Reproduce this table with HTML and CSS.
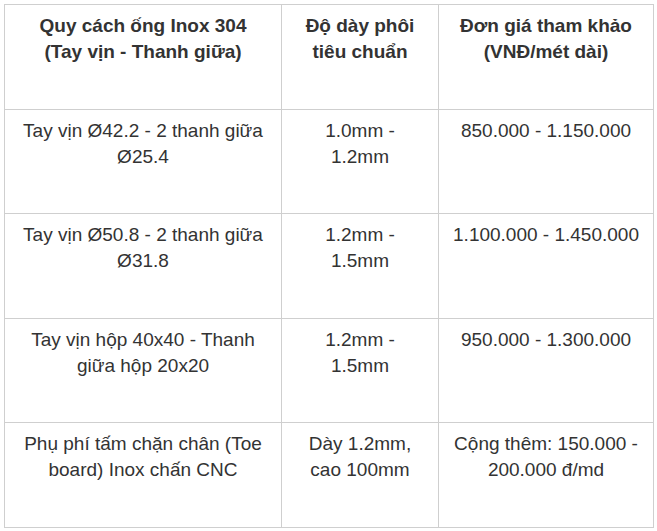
FILE: index.html
```html
<!DOCTYPE html>
<html lang="vi">
<head>
<meta charset="utf-8">
<title>Bảng giá ống Inox 304</title>
<link rel="stylesheet" href="styles.css">
</head>
<body>
<table class="price-table">
  <colgroup>
    <col class="c1">
    <col class="c2">
    <col class="c3">
  </colgroup>
  <thead>
    <tr>
      <th>Quy cách ống Inox 304 (Tay vịn - Thanh giữa)</th>
      <th>Độ dày phôi tiêu chuẩn</th>
      <th>Đơn giá tham khảo (VNĐ/mét dài)</th>
    </tr>
  </thead>
  <tbody>
    <tr>
      <td>Tay vịn Ø42.2 - 2 thanh giữa Ø25.4</td>
      <td>1.0mm - 1.2mm</td>
      <td>850.000 - 1.150.000</td>
    </tr>
    <tr>
      <td>Tay vịn Ø50.8 - 2 thanh giữa Ø31.8</td>
      <td>1.2mm - 1.5mm</td>
      <td>1.100.000 - 1.450.000</td>
    </tr>
    <tr>
      <td>Tay vịn hộp 40x40 - Thanh giữa hộp 20x20</td>
      <td>1.2mm - 1.5mm</td>
      <td>950.000 - 1.300.000</td>
    </tr>
    <tr>
      <td>Phụ phí tấm chặn chân (Toe board) Inox chấn CNC</td>
      <td>Dày 1.2mm, cao 100mm</td>
      <td>Cộng thêm: 150.000 - 200.000 đ/md</td>
    </tr>
  </tbody>
</table>
</body>
</html>
```
FILE: styles.css
```css
html, body {
  margin: 0;
  padding: 0;
  background: #fff;
}
body {
  padding: 4px;
  font-family: "Liberation Sans", Arial, sans-serif;
  color: #333;
}
.price-table {
  width: 649px;
  border-collapse: collapse;
  table-layout: fixed;
  font-size: 19px;
  line-height: 26px;
}
.c1 { width: 277px; }
.c2 { width: 157px; }
.c3 { width: 215px; }
.price-table th,
.price-table td {
  border: 1px solid #cfcfcf;
  padding: 8px 14px;
  text-align: center;
  vertical-align: top;
  height: 104.5px;
  box-sizing: border-box;
}
.price-table th {
  font-weight: bold;
  padding-left: 16px;
  padding-right: 16px;
}
.price-table td {
  font-weight: normal;
}
```
